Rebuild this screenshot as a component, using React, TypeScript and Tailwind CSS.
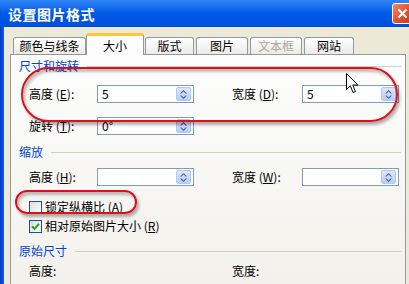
import React from 'react';

const font = { fontFamily: '"Noto Sans CJK SC", "Liberation Sans", sans-serif' };

// small XP-style spinner inside a text box
const Spin = () => (
  <div className="absolute right-[2px] top-[1px] bottom-[1px] w-[15px] rounded-[2px] border border-[#b4c8f6] bg-gradient-to-b from-[#dce7fd] to-[#b9cdf8] flex items-center justify-center">
    <svg width="9" height="11" viewBox="0 0 9 11">
      <path d="M4.5 1 L8 4.5 L6.5 4.5 L4.5 2.6 L2.5 4.5 L1 4.5 Z" fill="#4d6185" />
      <path d="M4.5 10 L8 6.5 L6.5 6.5 L4.5 8.4 L2.5 6.5 L1 6.5 Z" fill="#4d6185" />
    </svg>
  </div>
);

const Field = ({ value }: { value?: string }) => (
  <div className="relative w-[97px] h-[18px] border border-[#7f9db9] bg-white flex items-center pl-[4px] text-[12px] text-black leading-none">
    {value}
    <Spin />
  </div>
);

const Label = ({ text, k, w }: { text: string; k?: string; w: string }) => (
  <span className={`${w} text-[12px] leading-none text-black whitespace-nowrap`}>
    {text}
    {k && (
      <>
        {' '}(<span className="underline">{k}</span>):
      </>
    )}
    {!k && ':'}
  </span>
);

const Heading = ({ text }: { text: string }) => (
  <div className="h-[22px] flex items-center pl-[8px] pr-[4px] gap-[8px]">
    <span className="text-[12px] leading-none text-[#0046d5] whitespace-nowrap">{text}</span>
    <div className="flex-1 border-t border-[#d0d0bf]" />
  </div>
);

const Check = ({ on }: { on?: boolean }) => (
  <div className="w-[13px] h-[13px] border border-[#1c5180] bg-gradient-to-br from-[#dcdcd7] to-white flex items-center justify-center">
    {on && (
      <svg width="9" height="9" viewBox="0 0 9 9">
        <path d="M1 4.2 L3.5 6.8 L8 1.8" stroke="#21a121" strokeWidth="2" fill="none" />
      </svg>
    )}
  </div>
);

const tabs = [
  { t: '颜色与线条', w: 'w-[73px]', ml: 'ml-[3px]' },
  { t: '大小', w: 'w-[58px]', ml: 'ml-0', sel: true },
  { t: '版式', w: 'w-[49px]', ml: 'ml-[1px]' },
  { t: '图片', w: 'w-[52px]', ml: 'ml-[2px]' },
  { t: '文本框', w: 'w-[52px]', ml: 'ml-[2px]', off: true },
  { t: '网站', w: 'w-[50px]', ml: 'ml-[2px]' },
];

export default function App() {
  return (
    <div className="relative w-[409px] h-[284px] overflow-hidden bg-[#ece9d8] flex flex-col" style={font}>
      {/* title bar */}
      <div className="h-[27px] shrink-0 flex items-center pl-[8px] bg-gradient-to-b from-[#2f86f6] via-[#0058e6] to-[#004fdb]">
        <span className="text-[14px] font-bold text-white leading-none tracking-[0.5px]">设置图片格式</span>
        <div className="ml-auto mr-[-4px] w-[21px] h-[21px] rounded-[3px] border border-white bg-gradient-to-br from-[#f0886a] via-[#e2532f] to-[#c73a17] flex items-center justify-center">
          <svg width="11" height="11" viewBox="0 0 11 11">
            <path d="M1.5 1.5 L9.5 9.5 M9.5 1.5 L1.5 9.5" stroke="white" strokeWidth="2.2" />
          </svg>
        </div>
      </div>

      <div className="flex flex-1">
        {/* window frame left edge */}
        <div className="w-[4px] bg-gradient-to-r from-[#0036c4] to-[#1660e8]" />
        <div className="flex-1 pl-[6px] pr-[3px] pt-[6px] flex flex-col">
          {/* tabs */}
          <div className="flex items-end h-[21px]">
            {tabs.map((tab) => (
              <div
                key={tab.t}
                className={`${tab.w} ${tab.ml} flex items-center justify-center text-[12px] leading-none rounded-t-[3px] border-x border-[#919b9c] ${
                  tab.sel
                    ? 'h-[22px] mb-[-1px] relative z-10 bg-[#fcfcfe] border-t-[3px] border-t-[#ffc83c]'
                    : 'h-[17px] border-t bg-gradient-to-b from-white to-[#ecebe5]'
                } ${tab.off ? 'text-[#aca899]' : 'text-black'}`}
              >
                {tab.t}
              </div>
            ))}
          </div>

          {/* panel */}
          <div className="flex-1 border border-[#919b9c] border-b-0 bg-gradient-to-b from-[#fdfdfd] to-[#f2f1eb] flex flex-col">
            <Heading text="尺寸和旋转" />
            <div className="mt-[8px] h-[18px] flex items-center pl-[18px]">
              <Label text="高度" k="E" w="w-[68px]" />
              <Field value="5" />
              <span className="w-[38px]" />
              <Label text="宽度" k="D" w="w-[70px]" />
              <Field value="5" />
            </div>
            <div className="mt-[14px] h-[18px] flex items-center pl-[18px]">
              <Label text="旋转" k="T" w="w-[68px]" />
              <Field value="0°" />
            </div>

            <div className="mt-[6px]">
              <Heading text="缩放" />
            </div>
            <div className="mt-[5px] h-[18px] flex items-center pl-[18px]">
              <Label text="高度" k="H" w="w-[68px]" />
              <Field />
              <span className="w-[38px]" />
              <Label text="宽度" k="W" w="w-[70px]" />
              <Field />
            </div>

            <div className="mt-[12px] h-[18px] flex items-center gap-[3px] pl-[18px] text-[12px] leading-none">
              <Check />
              <span>
                锁定纵横比 (<span className="underline">A</span>)
              </span>
            </div>
            <div className="mt-[1px] h-[18px] flex items-center gap-[3px] pl-[18px] text-[12px] leading-none">
              <Check on />
              <span>
                相对原始图片大小 (<span className="underline">R</span>)
              </span>
            </div>

            <div className="mt-[5px]">
              <Heading text="原始尺寸" />
            </div>
            <div className="h-[18px] flex items-center pl-[18px]">
              <Label text="高度" w="w-[203px]" />
              <Label text="宽度" w="w-[70px]" />
            </div>
          </div>
        </div>
      </div>

      {/* red annotation rings */}
      <div className="absolute left-[21px] top-[67px] w-[377px] h-[55px] rounded-full border-2 border-[#dd1020] shadow-[2px_3px_3px_rgba(0,0,0,0.3),inset_2px_3px_3px_rgba(0,0,0,0.25)]" />
      <div className="absolute left-[15px] top-[190px] w-[122px] h-[24px] rounded-full border-2 border-[#dd1020] shadow-[2px_3px_3px_rgba(0,0,0,0.3),inset_2px_3px_3px_rgba(0,0,0,0.25)]" />

      {/* mouse pointer */}
      <svg className="absolute left-[346px] top-[73px]" width="13" height="21" viewBox="0 0 13 21">
        <path d="M0.5 0.5 L0.5 16.5 L4.3 12.8 L7 19.5 L9.4 18.5 L6.8 12 L12 12 Z" fill="white" stroke="black" strokeWidth="1" strokeLinejoin="round" />
      </svg>
    </div>
  );
}
